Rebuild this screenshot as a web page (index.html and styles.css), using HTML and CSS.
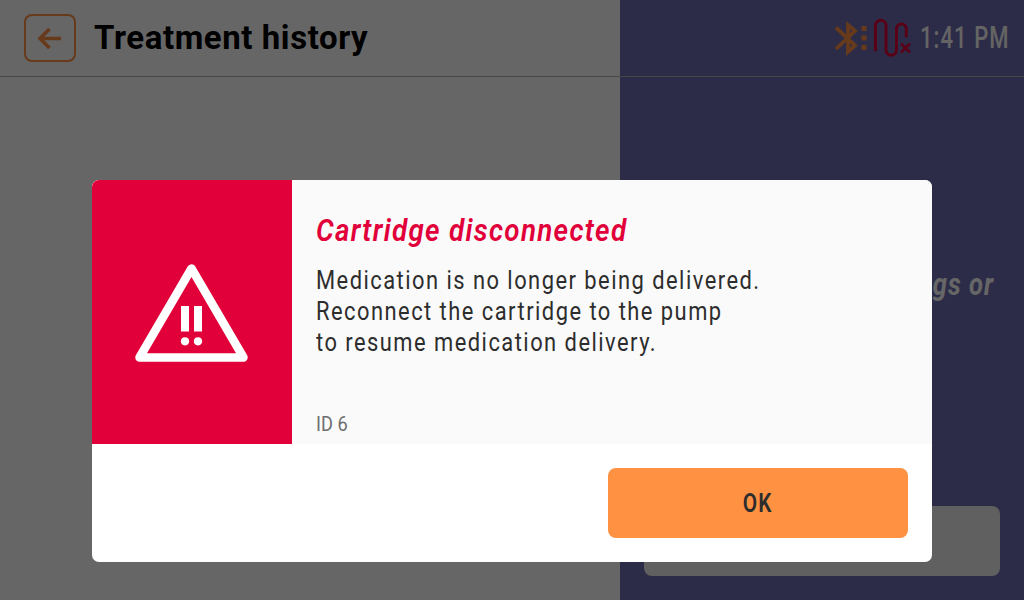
FILE: index.html
```html
<!DOCTYPE html>
<html lang="en">
<head>
<meta charset="utf-8">
<title>Treatment history</title>
<link rel="stylesheet" href="styles.css">
</head>
<body>
<div class="screen">
  <main class="history">
    <header class="bar">
      <button class="back" aria-label="Back">
        <svg width="52" height="48" viewBox="0 0 52 48"><path d="M37 24.500H17M25.500 15L16 24.500l9.500 9.500" fill="none" stroke="currentColor" stroke-width="3.600"/></svg>
      </button>
      <h1 class="title">Treatment history</h1>
    </header>
  </main>
  <aside class="panel">
    <div class="bar status">
      <svg class="icons" width="82" height="44" viewBox="832 16 82 44" fill="none">
        <path d="M836 27.500L855 45.500 848 52V25l7 5.800L836 49" stroke="#ff9142" stroke-width="3.800"/>
        <path d="M861.500 26h5v5h-5zM861.500 35.500h5v5h-5zM861.500 45h5v5h-5z" fill="#ff9142"/>
        <path d="M875.500 50V25.500a5.250 5.250 0 0 1 10.500 0V50a5.250 5.250 0 0 0 10.500 0V29a4.900 4.900 0 0 1 9.800 0V36" stroke="#e10039" stroke-width="3" stroke-linecap="round"/>
        <path d="M901 43.500l9 9M910 43.500l-9 9" stroke="#e10039" stroke-width="2.500"/>
      </svg>
      <span class="time">1:41 PM</span>
    </div>
    <p class="hint">gs or</p>
    <div class="panel-button"></div>
  </aside>
  <div class="overlay">
    <section class="dialog" role="alertdialog">
      <div class="content">
        <div class="alert">
          <svg width="116" height="102" viewBox="134 261 116 102">
            <path d="M191.500 268.500L243.500 357.500H139.500z" fill="none" stroke="#fff" stroke-width="8.500" stroke-linejoin="round"/>
            <path d="M181 306h8v25.500h-8zM194 306h8v25.500h-8z" fill="#fff"/>
            <circle cx="185" cy="341.300" r="4.100" fill="#fff"/><circle cx="198" cy="341.300" r="4.100" fill="#fff"/>
          </svg>
        </div>
        <div class="message">
          <h2 class="heading">Cartridge disconnected</h2>
          <p class="copy">Medication is no longer being delivered.<br>Reconnect the cartridge to the pump<br>to resume medication delivery.</p>
          <p class="code">ID 6</p>
        </div>
      </div>
      <footer class="actions"><button class="ok"><span class="ok-label">OK</span></button></footer>
    </section>
  </div>
</div>
</body>
</html>
```
FILE: styles.css
```css
* { box-sizing: border-box; margin: 0; }
body { font-family: Roboto, "Liberation Sans", sans-serif; overflow: hidden; }
button { border: 0; padding: 0; font: inherit; }
svg { display: block; flex: none; }
.screen { position: relative; display: grid; grid-template-columns: 620px 404px; width: 1024px; height: 600px; }
.history { background: #fff; }
.bar { display: flex; align-items: center; height: 77px; border-bottom: 1px solid #b4b4b4; }
.back { width: 52px; height: 48px; margin: 0 18px 0 24px; border-radius: 8px; background: none; color: #ff9142; box-shadow: inset 0 0 0 2px #ff9142; }
.title { padding-bottom: 2px; font-size: 34px; line-height: 40px; font-weight: 700; white-space: nowrap; transform-origin: left; transform: scaleX(.97); letter-spacing: .600px; }
.panel { display: flex; flex-direction: column; background: #6e6eb4; }
.status { padding-left: 212px; gap: 6px; }
.time { padding-bottom: 1px; font-size: 31px; font-weight: 500; color: #fafafa; white-space: nowrap; transform-origin: left; transform: scaleX(.71); letter-spacing: 1.500px; }
.hint { margin-top: 188px; padding-right: 30px; text-align: right; font-size: 32px; line-height: 38px; font-weight: 700; font-style: italic; color: #fff; transform-origin: 374px 50%; transform: scaleX(.8); letter-spacing: 1.200px; }
.panel-button { margin: auto 24px 24px; height: 70px; border-radius: 8px; background: #f1f1f1; }
.overlay { position: absolute; inset: 0; display: flex; justify-content: center; align-items: flex-start; padding-top: 180px; background: rgba(0,0,0,.6); }
.dialog { width: 840px; height: 382px; border-radius: 7px; overflow: hidden; background: #fff; }
.content { display: flex; height: 264px; background: #fafafa; }
.alert { display: grid; place-items: center; width: 200px; background: #e10039; }
.message { display: flex; flex-direction: column; align-items: flex-start; padding: 31px 0 0 24px; white-space: nowrap; }
.message > * { transform-origin: left; }
.heading { font-size: 32px; line-height: 38px; font-weight: 600; font-style: italic; color: #e10039; letter-spacing: 1.500px; transform: scaleX(.868); }
.copy { margin-top: 16px; font-size: 26px; line-height: 31px; font-weight: 400; color: #2d2d2d; letter-spacing: 1.750px; transform: scaleX(.842); }
.code { margin-top: 54px; font-size: 20px; line-height: 24px; font-weight: 400; color: #6e6e6e; transform: scaleX(.91); }
.actions { display: flex; justify-content: flex-end; padding: 24px; }
.ok { width: 300px; height: 70px; border-radius: 8px; background: #ff9142; color: #2d2d2d; font-size: 26px; font-weight: 600; }
.ok-label { display: inline-block; transform: scaleX(.8); letter-spacing: 1.500px; }
```
